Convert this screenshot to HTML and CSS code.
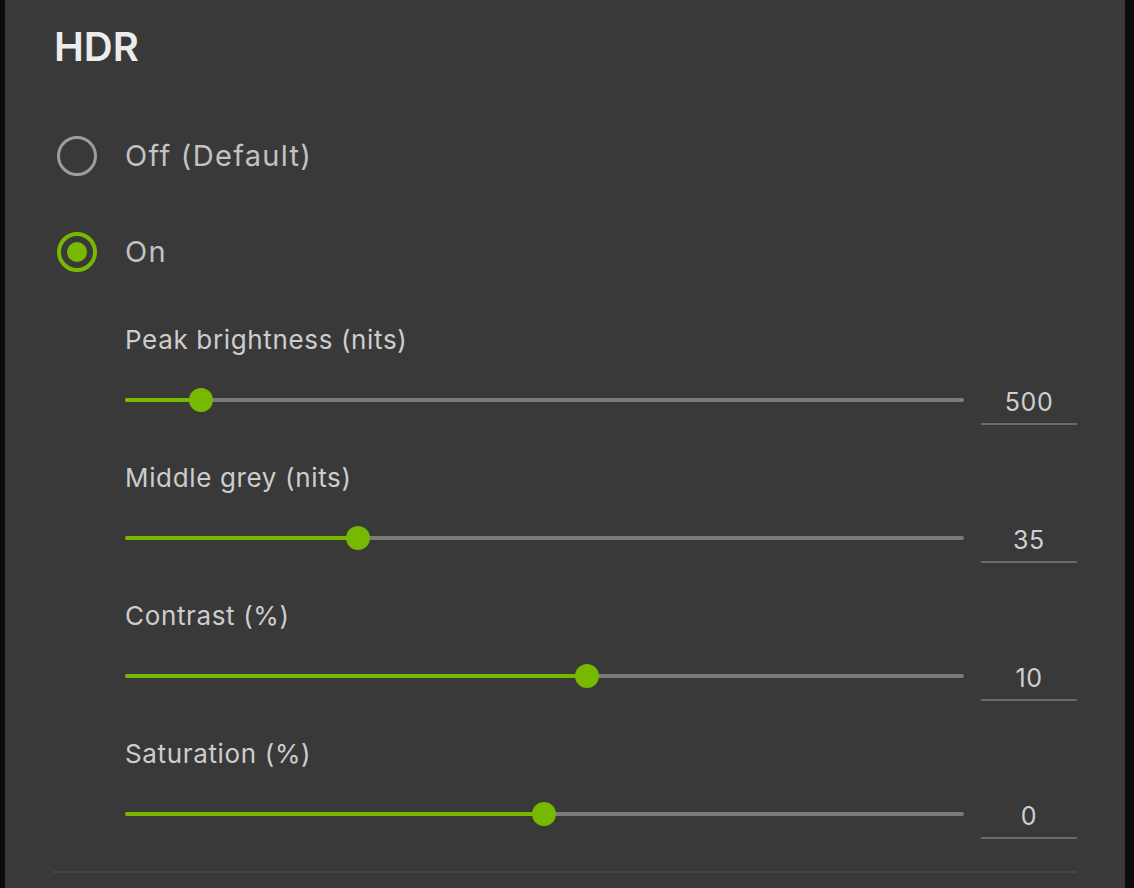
FILE: index.html
```html
<!DOCTYPE html>
<html lang="en">
<head>
<meta charset="utf-8">
<title>HDR</title>
<link rel="stylesheet" href="styles.css">
</head>
<body>
<main class="panel">
  <h1 class="title">HDR</h1>
  <div class="radio-group">
    <label class="radio-row">
      <span class="radio"></span>
      <span class="radio-label">Off (Default)</span>
    </label>
    <label class="radio-row">
      <span class="radio radio-on"><span class="radio-dot"></span></span>
      <span class="radio-label">On</span>
    </label>
  </div>
  <section class="slider-block">
    <div class="slider-label">Peak brightness (nits)</div>
    <div class="slider-row">
      <div class="track"><div class="fill" style="width:9.06%"></div><div class="thumb" style="left:9.06%"></div></div>
      <div class="value">500</div>
    </div>
  </section>
  <section class="slider-block">
    <div class="slider-label">Middle grey (nits)</div>
    <div class="slider-row">
      <div class="track"><div class="fill" style="width:27.77%"></div><div class="thumb" style="left:27.77%"></div></div>
      <div class="value">35</div>
    </div>
  </section>
  <section class="slider-block">
    <div class="slider-label">Contrast (%)</div>
    <div class="slider-row">
      <div class="track"><div class="fill" style="width:55.07%"></div><div class="thumb" style="left:55.07%"></div></div>
      <div class="value">10</div>
    </div>
  </section>
  <section class="slider-block">
    <div class="slider-label">Saturation (%)</div>
    <div class="slider-row">
      <div class="track"><div class="fill" style="width:49.94%"></div><div class="thumb" style="left:49.94%"></div></div>
      <div class="value">0</div>
    </div>
  </section>
  <hr class="divider">
</main>
</body>
</html>
```

FILE: styles.css
```css
* { box-sizing: border-box; }
html, body {
  margin: 0;
  height: 100%;
  overflow: hidden;
}
body {
  background: #0c0c0c;
  font-family: Inter, "Noto Sans", sans-serif;
  display: flex;
}
.panel {
  margin-left: 5px;
  width: 1120px;
  height: 888px;
  background: #393939;
  padding: 23px 48px 0 48px;
}
.title {
  margin: 0;
  font-size: 40px;
  line-height: 48px;
  font-weight: 600;
  color: #ececec;
  padding-left: 1px;
}
.radio-group {
  margin-top: 37px;
  display: flex;
  flex-direction: column;
}
.radio-row {
  height: 96px;
  display: flex;
  align-items: center;
  gap: 28px;
  padding-left: 4px;
}
.radio {
  width: 40px;
  height: 40px;
  border-radius: 50%;
  border: 3px solid #9d9d9d;
  display: flex;
  align-items: center;
  justify-content: center;
  flex: none;
}
.radio-on {
  border: 4px solid #76b900;
}
.radio-dot {
  width: 20px;
  height: 20px;
  border-radius: 50%;
  background: #76b900;
}
.radio-label {
  font-size: 29px;
  letter-spacing: 1.3px;
  color: #c2c2c2;
  line-height: 40px;
}
.slider-block {
  padding: 24px 0 13px 72px;
}
.slider-label {
  font-size: 26px;
  letter-spacing: 0.65px;
  line-height: 32px;
  color: #cdcdcd;
}
.slider-row {
  margin-top: 21px;
  display: flex;
  gap: 17px;
  height: 48px;
}
.track {
  position: relative;
  flex: 1;
  height: 4px;
  margin-top: 21px;
  background: #7b7b7b;
  border-radius: 2px;
}
.fill {
  height: 100%;
  background: #76b900;
  border-radius: 2px;
}
.thumb {
  position: absolute;
  top: 50%;
  width: 24px;
  height: 24px;
  margin: -12px 0 0 -12px;
  border-radius: 50%;
  background: #76b900;
}
.value {
  width: 96px;
  height: 48px;
  border-bottom: 2px solid #6b6b6b;
  text-align: center;
  font-size: 25px;
  letter-spacing: 0.6px;
  line-height: 46px;
  padding-top: 2px;
  color: #cfcfcf;
}
.divider {
  margin: 19px 0 0 0;
  border: 0;
  height: 2px;
  background: #474747;
}
```
